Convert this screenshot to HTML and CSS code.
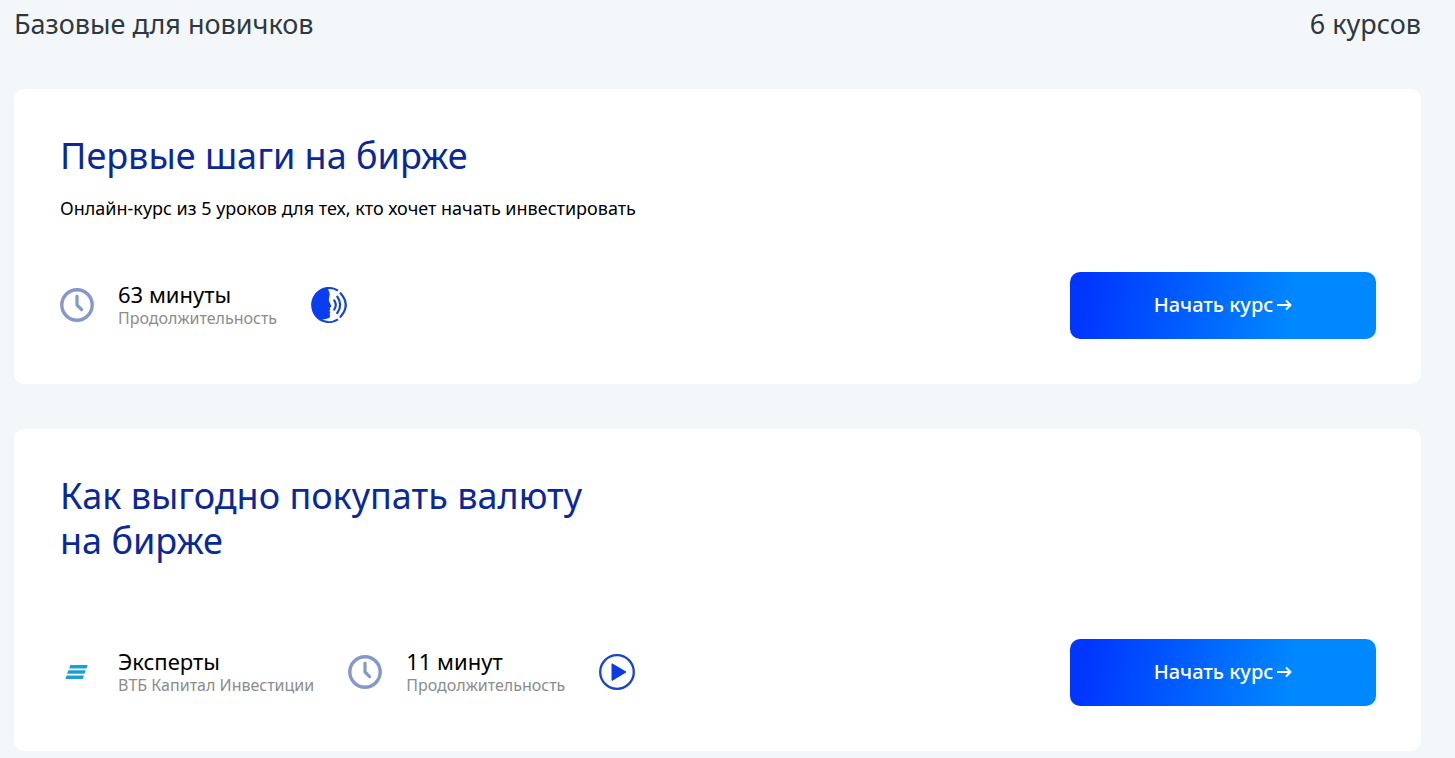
FILE: index.html
```
<!DOCTYPE html>
<html lang="ru">
<head>
<meta charset="utf-8">
<meta name="viewport" content="width=device-width, initial-scale=1">
<title>Базовые для новичков</title>
<link rel="stylesheet" href="styles.css">
</head>
<body>
<main class="page">
  <header class="section-head">
    <h1 class="section-title">Базовые для новичков</h1>
    <p class="section-count">6 курсов</p>
  </header>

  <div class="courses">
    <article class="card">
      <h2 class="card-title">Первые шаги на бирже</h2>
      <p class="card-text">Онлайн-курс из 5 уроков для тех, кто хочет начать инвестировать</p>
      <div class="card-foot">
        <div class="facts">
          <div class="fact">
            <svg class="icon" viewBox="0 0 34 34" aria-hidden="true"><circle cx="17" cy="17" r="15.2" fill="none" stroke="#8498cb" stroke-width="3.4"/><path d="M17 8V17l4.6 4.6" fill="none" stroke="#8498cb" stroke-width="3.2" stroke-linecap="round" stroke-linejoin="round"/></svg>
            <div class="fact-body">
              <span class="fact-value">63 минуты</span>
              <span class="fact-label">Продолжительность</span>
            </div>
          </div>
          <svg class="icon-kind" viewBox="0 0 36 36" role="img" aria-label="Аудио">
            <path d="M17.500 0A18 18 0 0 0 9 33.500C12 32.500 14.500 32.300 18 31C19.300 30.300 19 28.300 18.600 27L19.300 25L18.300 24L19.300 22.500L18.600 21L20.300 19.600C20 17.300 18.300 15.800 17.900 13.500C17.600 11 19 8.500 18.600 6.500C18.200 4 16.500 2.500 17.500 0Z" fill="#0a3cf0"/>
            <path d="M15.500 1.200A17 17 0 0 1 27 3.600M8.500 32.100A17 17 0 0 0 27 32.400" fill="none" stroke="#1546c8" stroke-width="2.200"/>
            <path d="M23.300 13.300Q26.300 17.800 23.300 22.500M26.300 9.700Q32 17.800 26.300 26M29.500 6.200Q40 18 29.500 29.800" fill="none" stroke="#1546c8" stroke-width="2.200" stroke-linecap="round"/>
          </svg>
        </div>
        <button class="start" type="button">Начать курс
          <svg class="arrow" viewBox="0 0 15 12" aria-hidden="true"><path d="M0 6h13M9 1.500L13.500 6L9 10.500" fill="none" stroke="currentColor" stroke-width="2" stroke-linejoin="round"/></svg>
        </button>
      </div>
    </article>

    <article class="card card-untexted">
      <h2 class="card-title">Как выгодно покупать валюту<br>на бирже</h2>
      <div class="card-foot">
        <div class="facts">
          <div class="fact">
            <svg class="icon" viewBox="0 0 34 34" aria-hidden="true"><path d="M10.300 10H27.800L26.500 13.600H9.100ZM8.300 15.200H25.800L24.500 18.800H7.100ZM6.600 20.400H24.100L22.800 24H5.400Z" fill="#18a0d2"/></svg>
            <div class="fact-body">
              <span class="fact-value">Эксперты</span>
              <span class="fact-label">ВТБ Капитал Инвестиции</span>
            </div>
          </div>
          <div class="fact">
            <svg class="icon" viewBox="0 0 34 34" aria-hidden="true"><circle cx="17" cy="17" r="15.2" fill="none" stroke="#8498cb" stroke-width="3.4"/><path d="M17 8V17l4.600 4.600" fill="none" stroke="#8498cb" stroke-width="3.200" stroke-linecap="round" stroke-linejoin="round"/></svg>
            <div class="fact-body">
              <span class="fact-value">11 минут</span>
              <span class="fact-label">Продолжительность</span>
            </div>
          </div>
          <svg class="icon-kind" viewBox="0 0 36 36" role="img" aria-label="Видео"><circle cx="18" cy="18" r="16.800" fill="none" stroke="#1546c8" stroke-width="2.300"/><path d="M13 9.800L27 18L13 26.400Z" fill="#0a3ce6" stroke="#0a3ce6" stroke-linejoin="round"/></svg>
        </div>
        <button class="start" type="button">Начать курс
          <svg class="arrow" viewBox="0 0 15 12" aria-hidden="true"><path d="M0 6h13M9 1.500L13.500 6L9 10.500" fill="none" stroke="currentColor" stroke-width="2" stroke-linejoin="round"/></svg>
        </button>
      </div>
    </article>
  </div>
</main>
</body>
</html>
```

FILE: styles.css
```
* {
  box-sizing: border-box;
}

body {
  margin: 0;
  background: #f3f7fa;
  color: #000;
  font-family: "Noto Sans", "Open Sans", sans-serif;
}

h1, h2, p {
  margin: 0;
  font-weight: 400;
}

.page {
  padding: 6px 34px 7px 14px;
}

.section-head {
  display: flex;
  justify-content: space-between;
  align-items: center;
  margin-bottom: 47px;
  color: #2f3840;
}

.section-title,
.section-count {
  font-size: 27px;
  line-height: 36px;
}

.courses {
  display: grid;
  gap: 45px;
}

.card {
  display: flex;
  flex-direction: column;
  padding: 44px 45px 45px 46px;
  border-radius: 10px;
  background: #fff;
}

.card-title {
  color: #0a2896;
  font-size: 36px;
  line-height: 45px;
}

.card-text {
  margin-top: 18px;
  font-size: 18px;
  line-height: 24px;
}

.card-foot {
  display: flex;
  justify-content: space-between;
  align-items: center;
  gap: 24px;
  margin-top: 52px;
}

.card-untexted .card-foot {
  margin-top: 76px;
}

.facts {
  display: flex;
  align-items: center;
  gap: 34px;
  padding-bottom: 1px;
}

.fact {
  display: flex;
  align-items: center;
  gap: 24px;
}

.fact-body {
  display: flex;
  flex-direction: column;
}

.fact-value {
  font-size: 22px;
  line-height: 26px;
}

.fact-label {
  color: #8c8c8c;
  font-size: 16px;
  line-height: 22px;
}

.icon {
  flex: none;
  width: 34px;
  height: 34px;
}

.icon-kind {
  flex: none;
  width: 36px;
  height: 36px;
}

.start {
  display: flex;
  flex: none;
  justify-content: center;
  align-items: center;
  gap: 4px;
  width: 306px;
  height: 67px;
  padding: 0 0 1px;
  border: 0;
  border-radius: 10px;
  background: linear-gradient(100deg, #0036ff 6%, #0088ff 72%);
  color: #fff;
  font-family: inherit;
  font-size: 20px;
  font-weight: 500;
  line-height: 28px;
  cursor: pointer;
}

.arrow {
  width: 15px;
  height: 12px;
}
```
